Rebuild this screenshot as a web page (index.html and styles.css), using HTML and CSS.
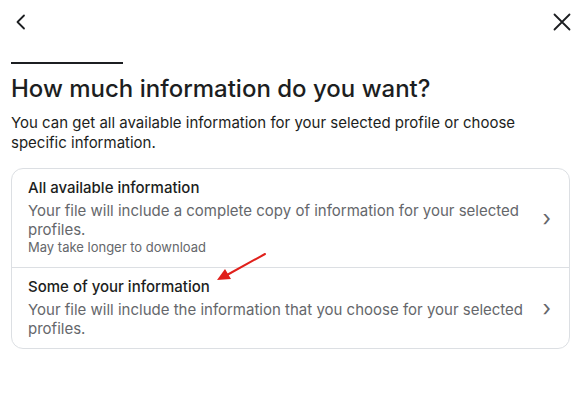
FILE: index.html
```html
<!DOCTYPE html>
<html lang="en">
<head>
    <meta charset="UTF-8">
    <title>Download your information</title>
    <link rel="stylesheet" href="styles.css">
</head>
<body>
    <div class="dialog">
        <div class="dialog-top">
            <button class="icon-btn" aria-label="Back">
                <svg width="16" height="16" viewBox="0 0 16 16"><path d="M11 1.5 4.5 8l6.5 6.5" fill="none" stroke="#1c1e21" stroke-width="1.8" stroke-linecap="round" stroke-linejoin="round"/></svg>
            </button>
            <button class="icon-btn" aria-label="Close">
                <svg width="18" height="18" viewBox="0 0 18 18"><path d="M1.5 1.5l15 15M16.5 1.5l-15 15" fill="none" stroke="#1c1e21" stroke-width="1.8" stroke-linecap="round"/></svg>
            </button>
        </div>

        <div class="progress"><span class="progress-bar"></span></div>

        <h1 class="title">How much information do you want?</h1>
        <p class="lead">You can get all available information for your selected profile or choose specific information.</p>

        <div class="options">
            <!-- All info -->
            <a href="#" class="option">
                <div class="option-text">
                    <h3>All available information</h3>
                    <p>Your file will include a complete copy of information for your selected profiles.</p>
                    <small>May take longer to download</small>
                </div>
                <span class="chevron">&#8250;</span>
            </a>
            <!-- Some info -->
            <a href="#" class="option">
                <div class="option-text">
                    <h3>Some of your information</h3>
                    <p>Your file will include the information that you choose for your selected profiles.</p>
                </div>
                <span class="chevron">&#8250;</span>
                <svg class="arrow" width="54" height="32" viewBox="0 0 54 32">
                    <path d="M50 2 12 23" stroke="#e0201b" stroke-width="2" stroke-linecap="round"/>
                    <path d="M2 28 10 17 16 27Z" fill="#e0201b"/>
                </svg>
            </a>
        </div>
    </div>
</body>
</html>
```

FILE: styles.css
```css
:root {
    --text-color: #1c1e21;
    --muted-color: #65676b;
    --border-color: #dcdfe3;
}
body {
    margin: 0;
    background: #ffffff;
    font-family: 'Inter', 'Noto Sans', sans-serif;
    color: var(--text-color);
}
.dialog {
    padding: 8px 11px 0 11px;
}
.dialog-top {
    display: flex;
    justify-content: space-between;
    align-items: center;
    height: 28px;
    margin-right: -2px;
}
.icon-btn {
    background: none; border: 0; padding: 0; cursor: pointer;
    display: flex; align-items: center; justify-content: center;
    width: 20px; height: 24px;
}
.progress { margin-top: 26px; height: 2px; }
.progress-bar { display: block; width: 112px; height: 2px; background: #1c1e21; }

.title {
    font-size: 24px;
    font-weight: 500;
    margin: 11px 0 10px 0;
    line-height: 28px;
}
.lead {
    font-size: 15px;
    line-height: 20px;
    margin: 0 0 15px 0;
    padding-right: 40px;
}

/* Options card */
.options {
    border: 1px solid var(--border-color);
    border-radius: 12px;
}
.option {
    position: relative;
    display: flex;
    align-items: center;
    gap: 16px;
    padding: 9px 18px 10px 16px;
    text-decoration: none;
    color: inherit;
}
.option + .option { border-top: 1px solid var(--border-color); }
.option-text { flex: 1; }
.option h3 {
    margin: 0 0 3px 0;
    font-size: 15px;
    font-weight: 500;
    line-height: 20px;
}
.option p {
    margin: 0;
    font-size: 15px;
    line-height: 19px;
    color: var(--muted-color);
}
.option small {
    display: block;
    font-size: 13px;
    line-height: 17px;
    padding-bottom: 1px;
    color: var(--muted-color);
}
.chevron {
    font-size: 22px;
    color: var(--muted-color);
    line-height: 20px;
}
.arrow {
    position: absolute;
    left: 203px;
    top: -16px;
}
```
